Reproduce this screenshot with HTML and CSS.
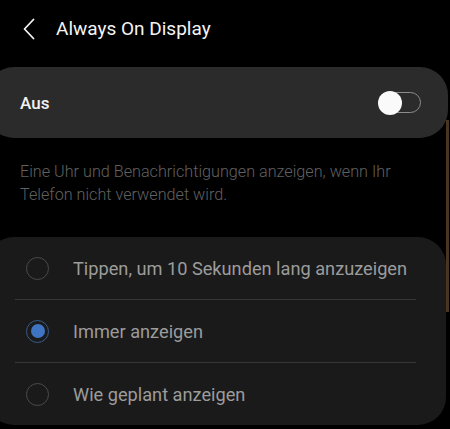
FILE: index.html
```html
<!DOCTYPE html>
<html lang="de">
<head>
<meta charset="utf-8">
<title>Always On Display</title>
<link rel="stylesheet" href="styles.css">
</head>
<body>
<div class="screen">
  <header class="header">
    <svg class="back" width="14" height="22" viewBox="0 0 14 22" aria-hidden="true">
      <path d="M11.5 1.5 L2.5 11 L11.5 20.5" fill="none" stroke="#f2f2f2" stroke-width="1.8" stroke-linecap="round" stroke-linejoin="round"/>
    </svg>
    <h1 class="title">Always On Display</h1>
  </header>

  <section class="card master">
    <span class="master-label">Aus</span>
    <span class="switch"><span class="knob"></span></span>
  </section>

  <p class="desc">Eine Uhr und Benachrichtigungen anzeigen, wenn Ihr Telefon nicht verwendet wird.</p>

  <section class="card options">
    <div class="row">
      <span class="radio"></span>
      <span class="row-label">Tippen, um 10 Sekunden lang anzuzeigen</span>
    </div>
    <div class="divider"></div>
    <div class="row">
      <span class="radio checked"><span class="dot"></span></span>
      <span class="row-label">Immer anzeigen</span>
    </div>
    <div class="divider"></div>
    <div class="row">
      <span class="radio"></span>
      <span class="row-label">Wie geplant anzeigen</span>
    </div>
  </section>

  <div class="scrollbar"></div>
</div>
</body>
</html>
```

FILE: styles.css
```css
html, body {
  margin: 0;
  padding: 0;
  background: #000;
}

.screen {
  position: relative;
  width: 450px;
  height: 429px;
  overflow: hidden;
  background: #000;
  font-family: Roboto, "Noto Sans", "Liberation Sans", sans-serif;
}

.header {
  height: 56px;
  display: flex;
  align-items: center;
  padding-left: 22px;
}

.back {
  display: block;
  margin-top: 1px;
}

.title {
  margin: 0 0 0 20px;
  font-size: 19px;
  font-weight: 400;
  color: #f4f4f4;
}

.card {
  margin-left: -14px;
  border-radius: 28px;
}

.master {
  margin-top: 11px;
  width: 462px;
  height: 71px;
  box-sizing: border-box;
  background: #2b2b2b;
  display: flex;
  align-items: center;
  justify-content: space-between;
  padding: 0 27px 0 34px;
}

.master-label {
  font-size: 17px;
  font-weight: 500;
  color: #f2f2f2;
}

.switch {
  position: relative;
  width: 42px;
  height: 21px;
  box-sizing: border-box;
  border: 1.5px solid #8c8c8c;
  border-radius: 11px;
}

.knob {
  position: absolute;
  left: -2.5px;
  top: 50%;
  width: 24px;
  height: 24px;
  margin-top: -12px;
  border-radius: 50%;
  background: #fafafa;
}

.desc {
  margin: 22px 48px 0 20px;
  font-size: 16.2px;
  font-weight: 300;
  line-height: 23px;
  color: #606060;
}

.options {
  margin-top: 31px;
  width: 460px;
  background: #1a1a1a;
}

.row {
  height: 62px;
  display: flex;
  align-items: center;
  padding-left: 40px;
}

.radio {
  width: 23px;
  height: 23px;
  box-sizing: border-box;
  border: 1.5px solid #4a4a4a;
  border-radius: 50%;
  display: flex;
  align-items: center;
  justify-content: center;
  flex: none;
}

.radio.checked {
  border-color: #3a5a88;
}

.dot {
  width: 14px;
  height: 14px;
  border-radius: 50%;
  background: #3f74c2;
}

.row-label {
  margin-left: 24px;
  font-size: 18.2px;
  color: #9c9c9c;
  white-space: nowrap;
}

.divider {
  height: 1px;
  background: #363636;
  margin: 0 30px 0 29px;
}

.scrollbar {
  position: absolute;
  right: 1px;
  top: 120px;
  width: 3px;
  height: 192px;
  background: #4a3420;
}
```
